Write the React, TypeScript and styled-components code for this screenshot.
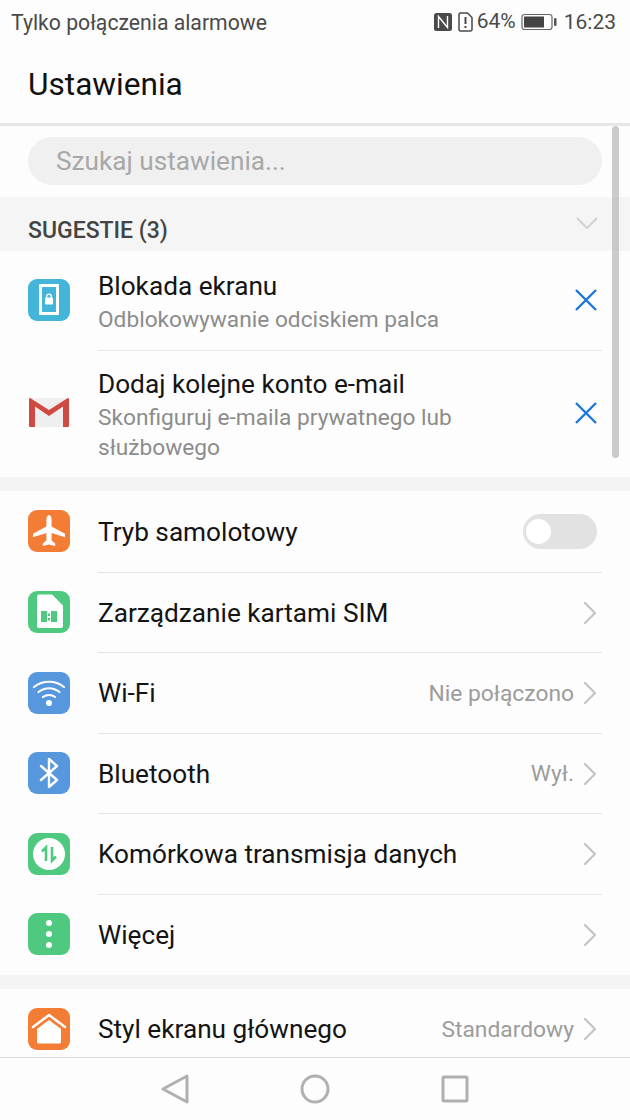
import React from 'react';
import styled, { createGlobalStyle } from 'styled-components';

const GlobalStyle = createGlobalStyle`
  html, body {
    margin: 0;
    padding: 0;
    background: #fdfdfd;
    font-family: Roboto, "Liberation Sans", sans-serif;
  }
`;

const Screen = styled.div`
  position: relative;
  width: 630px;
  height: 1120px;
  display: flex;
  flex-direction: column;
  overflow: hidden;
  background: #fdfdfd;
`;

const StatusBar = styled.div`
  height: 44px;
  flex: none;
  display: flex;
  align-items: center;
  justify-content: space-between;
  padding: 0 14px 0 11px;
  font-size: 21.2px;
  color: #4a4a4a;
`;

const StatusRight = styled.div`
  display: flex;
  align-items: center;
  gap: 5px;
`;

const Percent = styled.span`
  margin-left: -1px;
  margin-top: -3px;
  font-size: 21px;
`;

const Clock = styled.span`
  font-size: 21px;
  margin-left: 2px;
`;

const Header = styled.div`
  height: 77px;
  padding: 2px 28px 0;
  flex: none;
  display: flex;
  align-items: center;
  font-size: 31.6px;
  color: #111;
  border-bottom: 3px solid #e6e6e6;
`;

const SearchWrap = styled.div`
  flex: none;
  padding: 11px 28px 12px;
`;

const SearchBox = styled.div`
  height: 48px;
  border-radius: 24px;
  background: #f0f0f0;
  color: #a8a8a8;
  font-size: 26.2px;
  display: flex;
  align-items: center;
  padding-left: 28px;
`;

const SectionHead = styled.div`
  height: 54px;
  flex: none;
  background: #f5f5f5;
  display: flex;
  justify-content: space-between;
  padding: 0 32px 0 28px;
  font-size: 23px;
  font-weight: 500;
  color: #444;
`;

const SectionLabel = styled.span`
  margin-top: 20px;
`;

const SectionChevron = styled.svg`
  margin-top: 19px;
`;

const List = styled.div`
  flex: none;
  background: #fdfdfd;
`;

const Gap = styled.div`
  height: 14px;
  flex: none;
  background: #f4f4f4;
`;

const Row = styled.div<{ $h: number }>`
  height: ${(p) => p.$h}px;
  display: flex;
  align-items: center;
  padding: 0 28px;
`;

const IconSlot = styled.div`
  width: 42px;
  height: 42px;
  flex: none;
  margin: 0 28px 2px 0;
`;

const Tile = styled.div<{ $bg: string }>`
  width: 42px;
  height: 42px;
  border-radius: 9px;
  background: ${(p) => p.$bg};
  display: flex;
  align-items: center;
  justify-content: center;
`;

const RowBody = styled.div<{ $line: boolean }>`
  flex: 1;
  align-self: stretch;
  display: flex;
  align-items: center;
  justify-content: space-between;
  border-bottom: ${(p) => (p.$line ? '1px solid #e6e6e6' : '1px solid transparent')};
`;

const Texts = styled.div<{ $hasSub: boolean }>`
  display: flex;
  flex-direction: column;
  padding-top: ${(p) => (p.$hasSub ? 3 : 0)}px;
`;

const Title = styled.div`
  font-size: 26.2px;
  line-height: 32px;
  color: #141414;
`;

const Sub = styled.div`
  font-size: 22.7px;
  line-height: 30px;
  margin-top: 3px;
  color: #8c8c8c;
  max-width: 400px;
`;

const Trail = styled.div`
  display: flex;
  align-items: center;
  gap: 9px;
  font-size: 22.8px;
  color: #9c9c9c;
  padding-right: 5px;
`;

const CloseIcon = styled.svg`
  margin: 0 4px 2px 0;
`;

const Toggle = styled.div`
  width: 74px;
  height: 35px;
  border-radius: 18px;
  background: #e2e2e2;
  margin-right: 5px;
  display: flex;
  align-items: center;
  padding-left: 3px;
  box-sizing: border-box;
`;

const Knob = styled.div`
  width: 25px;
  height: 25px;
  border-radius: 50%;
  background: #fff;
`;

const Clipped = styled.div`
  flex: 1;
  min-height: 0;
  overflow: hidden;
`;

const NavBar = styled.div`
  height: 62px;
  flex: none;
  border-top: 1px solid #dcdcdc;
  background: #fdfdfd;
  display: flex;
  align-items: center;
  justify-content: center;
  gap: 111px;
`;

const Scrollbar = styled.div`
  position: absolute;
  left: 612px;
  top: 126px;
  width: 7px;
  height: 332px;
  border-radius: 4px;
  background: rgba(190, 190, 190, 0.8);
`;

const Chevron = () => (
  <svg width="14" height="24" viewBox="0 0 14 24" fill="none" stroke="#c4c4c4" strokeWidth="2.2" strokeLinecap="round" strokeLinejoin="round">
    <path d="M2 2l10 10L2 22" />
  </svg>
);

const Close = () => (
  <CloseIcon width="24" height="24" viewBox="0 0 24 24" fill="none" stroke="#1b78d8" strokeWidth="2.4">
    <path d="M2 2l20 20M22 2L2 22" />
  </CloseIcon>
);

const W = '#fff';

const icons: Record<string, React.ReactNode> = {
  lock: (
    <Tile $bg="#43b5d8">
      <svg width="42" height="42" viewBox="0 0 42 42">
        <rect x="11" y="5" width="20" height="31" rx="1" fill={W} />
        <rect x="14" y="8" width="14" height="25" fill="#43b5d8" />
        <rect x="17" y="18.5" width="8" height="7" rx="1" fill={W} />
        <path d="M18.7 19v-1.5a2.3 2.3 0 014.6 0V19" fill="none" stroke={W} strokeWidth="1.3" />
      </svg>
    </Tile>
  ),
  gmail: (
    <svg width="42" height="42" viewBox="0 0 42 42">
      <rect x="2" y="6" width="38" height="29" rx="1" fill="#efefef" />
      <path d="M1 7a1 1 0 011.500-.800L21 18 39.500 6.200A1 1 0 0141 7v27a1 1 0 01-1 1h-5V14.500L21 24 7 14.500V35H2a1 1 0 01-1-1z" fill="#cf4a40" />
    </svg>
  ),
  plane: (
    <Tile $bg="#f47d36">
      <svg width="42" height="42" viewBox="0 0 42 42" fill={W}>
        <path d="M21 5c1.6 0 2.6 2.2 2.6 4.5v7L37 23.8v3.4l-13.4-4.1v7.5l3.6 2.8V36L21 34.500 14.800 36v-2.600l3.600-2.800v-7.500L5 27.200v-3.400l13.400-7.300v-7C18.400 7.200 19.400 5 21 5z" />
      </svg>
    </Tile>
  ),
  sim: (
    <Tile $bg="#4ec97f">
      <svg width="42" height="42" viewBox="0 0 42 42">
        <path d="M9 5.500a2 2 0 012-2h13l11 11V35a2 2 0 01-2 2H11a2 2 0 01-2-2z" fill={W} />
        <path d="M13 20h6v11h-6zM23 20h6v11h-6zM20 22.500h2v2.500h-2zM20 27h2v2.500h-2z" fill="#4ec97f" />
      </svg>
    </Tile>
  ),
  wifi: (
    <Tile $bg="#5697de">
      <svg width="42" height="42" viewBox="0 0 42 42" fill="none" stroke={W} strokeWidth="2.2" strokeLinecap="round">
        <path d="M6 15c9-7 21-7 30 0" />
        <path d="M10.500 20c6.500-5 14.500-5 21 0" />
        <path d="M15 25c3.500-2.700 8.500-2.700 12 0" />
        <circle cx="21" cy="31" r="3" fill={W} stroke="none" />
      </svg>
    </Tile>
  ),
  bluetooth: (
    <Tile $bg="#5697de">
      <svg width="42" height="42" viewBox="0 0 42 42" fill="none" stroke={W} strokeWidth="2.4" strokeLinejoin="round" strokeLinecap="round">
        <path d="M13 14l16 14-8 7V7l8 7-16 14" />
      </svg>
    </Tile>
  ),
  data: (
    <Tile $bg="#4ec97f">
      <svg width="42" height="42" viewBox="0 0 42 42">
        <circle cx="21" cy="21" r="16" fill={W} />
        <path d="M18 28V14.500l-4 4" fill="none" stroke="#4ec97f" strokeWidth="2.600" />
        <path d="M24 14v13.500l4-4" fill="none" stroke="#4ec97f" strokeWidth="2.600" />
      </svg>
    </Tile>
  ),
  more: (
    <Tile $bg="#4ec97f">
      <svg width="42" height="42" viewBox="0 0 42 42" fill={W}>
        <circle cx="21" cy="10" r="3" />
        <circle cx="21" cy="21" r="3" />
        <circle cx="21" cy="32" r="3" />
      </svg>
    </Tile>
  ),
  home: (
    <Tile $bg="#f47d36">
      <svg width="42" height="42" viewBox="0 0 42 42">
        <path d="M5 19L21 7l16 12" fill="none" stroke={W} strokeWidth="2.500" strokeLinecap="round" strokeLinejoin="round" />
        <path d="M9 21L21 12l12 9v13a1.500 1.500 0 01-1.500 1.500h-21A1.500 1.500 0 019 34z" fill={W} />
      </svg>
    </Tile>
  ),
};

type Item = { icon: string; title: string; sub?: string; value?: string; trail?: 'close' | 'toggle' | 'chevron'; h: number; line?: boolean };

const suggestions: Item[] = [
  { icon: 'lock', title: 'Blokada ekranu', sub: 'Odblokowywanie odciskiem palca', trail: 'close', h: 100, line: true },
  { icon: 'gmail', title: 'Dodaj kolejne konto e-mail', sub: 'Skonfiguruj e-maila prywatnego lub służbowego', trail: 'close', h: 126 },
];

const network: Item[] = [
  { icon: 'plane', title: 'Tryb samolotowy', trail: 'toggle', h: 82, line: true },
  { icon: 'sim', title: 'Zarządzanie kartami SIM', trail: 'chevron', h: 80, line: true },
  { icon: 'wifi', title: 'Wi-Fi', value: 'Nie połączono', trail: 'chevron', h: 81, line: true },
  { icon: 'bluetooth', title: 'Bluetooth', value: 'Wył.', trail: 'chevron', h: 80, line: true },
  { icon: 'data', title: 'Komórkowa transmisja danych', trail: 'chevron', h: 81, line: true },
  { icon: 'more', title: 'Więcej', trail: 'chevron', h: 80 },
];

const SettingRow: React.FC<{ item: Item }> = ({ item }) => (
  <Row $h={item.h}>
    <IconSlot>{icons[item.icon]}</IconSlot>
    <RowBody $line={!!item.line}>
      <Texts $hasSub={!!item.sub}>
        <Title>{item.title}</Title>
        {item.sub && <Sub>{item.sub}</Sub>}
      </Texts>
      {item.trail === 'close' && <Close />}
      {item.trail === 'toggle' && (
        <Toggle>
          <Knob />
        </Toggle>
      )}
      {item.trail === 'chevron' && (
        <Trail>
          {item.value}
          <Chevron />
        </Trail>
      )}
    </RowBody>
  </Row>
);

export default function App() {
  return (
    <Screen>
      <GlobalStyle />
      <StatusBar>
        <span>Tylko połączenia alarmowe</span>
        <StatusRight>
          <svg width="20" height="20" viewBox="0 0 20 20">
            <rect x="1" y="1" width="18" height="18" rx="2.500" fill="#4a4a4a" />
            <path d="M5.500 16V4.500l9 11V4" fill="none" stroke="#fff" strokeWidth="1.400" />
          </svg>
          <svg width="15" height="20" viewBox="0 0 15 20" fill="none">
            <path d="M1 2.500A1.500 1.500 0 012.500 1h7L14 5.500v12a1.500 1.500 0 01-1.500 1.500h-10A1.500 1.500 0 011 17.500z" stroke="#4a4a4a" strokeWidth="1.500" />
            <path d="M7.500 5v7M7.500 14v2" stroke="#4a4a4a" strokeWidth="2" />
          </svg>
          <Percent>64%</Percent>
          <svg width="36" height="18" viewBox="0 0 36 18">
            <rect x="1" y="1.500" width="30" height="15" rx="2.500" fill="none" stroke="#666" strokeWidth="1.200" />
            <rect x="3" y="3.500" width="20" height="11" fill="#444" />
            <rect x="33" y="5" width="2.500" height="8" rx="1" fill="#555" />
          </svg>
          <Clock>16:23</Clock>
        </StatusRight>
      </StatusBar>
      <Header>Ustawienia</Header>
      <SearchWrap>
        <SearchBox>Szukaj ustawienia...</SearchBox>
      </SearchWrap>
      <SectionHead>
        <SectionLabel>SUGESTIE (3)</SectionLabel>
        <SectionChevron width="22" height="14" viewBox="0 0 22 14" fill="none" stroke="#d2d2d2" strokeWidth="2">
          <path d="M1 2l10 10L21 2" />
        </SectionChevron>
      </SectionHead>
      <List>
        {suggestions.map((item) => (
          <SettingRow key={item.title} item={item} />
        ))}
      </List>
      <Gap />
      <List>
        {network.map((item) => (
          <SettingRow key={item.title} item={item} />
        ))}
      </List>
      <Gap />
      <Clipped>
        <SettingRow
          item={{ icon: 'home', title: 'Styl ekranu głównego', value: 'Standardowy', trail: 'chevron', h: 81 }}
        />
      </Clipped>
      <NavBar>
        <svg width="28" height="30" viewBox="0 0 28 30" fill="none" stroke="#b0b0b0" strokeWidth="3" strokeLinejoin="round">
          <path d="M26 2v26L2 15z" />
        </svg>
        <svg width="30" height="30" viewBox="0 0 30 30" fill="none" stroke="#b0b0b0" strokeWidth="3">
          <circle cx="15" cy="15" r="13" />
        </svg>
        <svg width="28" height="28" viewBox="0 0 28 28" fill="none" stroke="#b0b0b0" strokeWidth="3" strokeLinejoin="round">
          <rect x="2" y="2" width="24" height="24" rx="1" />
        </svg>
      </NavBar>
      <Scrollbar />
    </Screen>
  );
}
